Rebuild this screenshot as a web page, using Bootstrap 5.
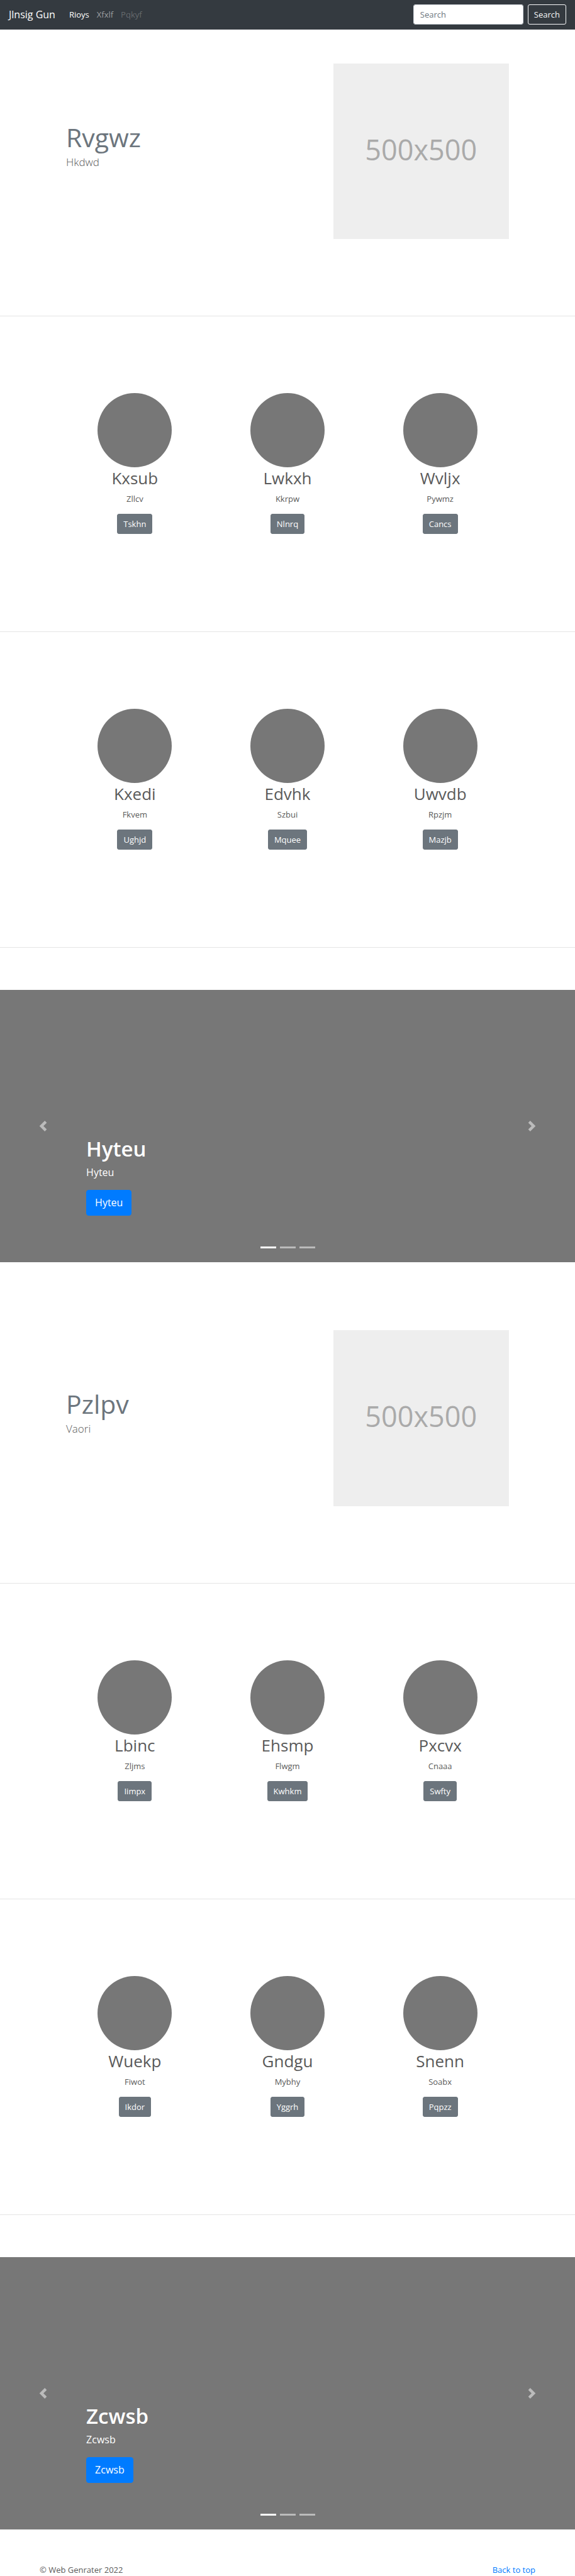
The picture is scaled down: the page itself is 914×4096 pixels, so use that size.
<!DOCTYPE html>
<html lang="en">
<head>
<meta charset="utf-8">
<meta name="viewport" content="width=device-width, initial-scale=1">
<title>Jlnsig Gun</title>
<link href="https://cdn.jsdelivr.net/npm/bootstrap@5.3.0/dist/css/bootstrap.min.css" rel="stylesheet">
<style>
  body { font-family: "Open Sans", "Noto Sans", sans-serif; font-size: 13px; line-height: 20px; color: #5a5a5a; background: #fff; }
  p { margin: 0; }
  .btn { --bs-btn-font-size: 13px; --bs-btn-line-height: 20px; --bs-btn-padding-x: 9px; --bs-btn-padding-y: 5px; --bs-btn-border-radius: 3px; }
  .btn-secondary { --bs-btn-bg: #6c757d; --bs-btn-border-color: #6c757d; }

  .site-nav { --bs-navbar-nav-link-padding-x: 6px; background: #343a40; padding: 7px 14px 8px; }
  .site-nav .navbar-brand { font-size: 16px; line-height: 24px; padding: 0; margin-right: 16px; color: #fff; }
  .site-nav .nav-link { font-size: 13px; line-height: 20px; padding-top: 6px; padding-bottom: 6px; color: rgba(255,255,255,.5); }
  .site-nav .nav-link.active { color: #fff; }
  .site-nav .nav-link.disabled { color: rgba(255,255,255,.25); }
  .site-nav .form-control { width: 175px; height: 32px; font-size: 13px; line-height: 20px; padding: 5px 10px; border-color: #ced4da; border-radius: 3px; margin-right: 7px; }
  .site-nav .form-control::placeholder { color: #6c757d; }

  .page-wrap { max-width: 728px; }
  .rule { margin: 0; border: 0; height: 1px; background: #e5e5e5; opacity: 1; }

  .feature { padding-top: 54px; padding-bottom: 122px; }
  .feature-text { padding-top: 92px; }
  .feature-title { font-size: 41px; line-height: 50px; font-weight: 400; color: #6c757d; margin: 0 0 2px; }
  .feature-lead { font-size: 17px; line-height: 25px; font-weight: 300; }
  .thumb { background: #eee; color: #aaa; font-size: 45px; }
  .thumb > div { padding-bottom: 6px; }

  .trio { padding-top: 122px; padding-bottom: 155px; }
  .avatar { display: block; width: 118px; height: 118px; margin: 0 auto 2px; background: #777; border-radius: 50%; }
  .trio-title { font-size: 26px; line-height: 31px; font-weight: 400; margin: 0 0 7px; }
  .trio p { margin-bottom: 14px; }

  .banner { margin-top: 67px; margin-bottom: 54px; }
  .banner .carousel-item { height: 433px; background: #777; }
  .banner .carousel-caption { bottom: 74px; padding: 0; text-align: left; }
  .banner-title { font-size: 33px; line-height: 40px; font-weight: 600; margin: 0 0 5px; }
  .banner-lead { font-size: 16px; line-height: 24px; }
  .banner .btn-primary { --bs-btn-bg: #007bff; --bs-btn-border-color: #007bff; --bs-btn-font-size: 16px; --bs-btn-line-height: 25px; --bs-btn-padding-x: 13px; --bs-btn-padding-y: 7px; --bs-btn-border-radius: 4px; margin-top: 16px; }
  .banner .carousel-indicators { margin-bottom: 14px; }
  .banner .carousel-indicators [data-bs-target] { width: 25px; height: 3px; margin: 0 3px; border-top-width: 8px; border-bottom-width: 8px; }
  .banner svg { width: 17px; height: 17px; fill: #fff; }

  .site-footer { max-width: 812px; }
  .site-footer a { color: #007bff; text-decoration: none; }
</style>
</head>
<body id="top">

<header>
  <nav class="navbar navbar-expand-md site-nav">
    <a class="navbar-brand" href="#">Jlnsig Gun</a>
    <ul class="navbar-nav flex-row me-auto">
      <li class="nav-item"><a class="nav-link active" href="#">Rioys</a></li>
      <li class="nav-item"><a class="nav-link" href="#">Xfxlf</a></li>
      <li class="nav-item"><a class="nav-link disabled" href="#">Pqkyf</a></li>
    </ul>
    <form class="d-flex" role="search">
      <input class="form-control" type="search" placeholder="Search" aria-label="Search">
      <button class="btn btn-outline-light" type="button">Search</button>
    </form>
  </nav>
</header>

<main>
  <section class="feature">
    <div class="container page-wrap"><div class="row">
      <div class="col-7 feature-text">
        <h2 class="feature-title">Rvgwz</h2>
        <p class="feature-lead">Hkdwd</p>
      </div>
      <div class="col-5"><div class="ratio ratio-1x1 thumb"><div class="d-flex align-items-center justify-content-center">500x500</div></div></div>
    </div></div>
  </section>
  <hr class="rule">

  <section class="trio">
    <div class="container page-wrap"><div class="row text-center">
      <div class="col-4"><span class="avatar"></span><h2 class="trio-title">Kxsub</h2><p>Zllcv</p><button class="btn btn-secondary" type="button">Tskhn</button></div>
      <div class="col-4"><span class="avatar"></span><h2 class="trio-title">Lwkxh</h2><p>Kkrpw</p><button class="btn btn-secondary" type="button">Nlnrq</button></div>
      <div class="col-4"><span class="avatar"></span><h2 class="trio-title">Wvljx</h2><p>Pywmz</p><button class="btn btn-secondary" type="button">Cancs</button></div>
    </div></div>
  </section>
  <hr class="rule">

  <section class="trio">
    <div class="container page-wrap"><div class="row text-center">
      <div class="col-4"><span class="avatar"></span><h2 class="trio-title">Kxedi</h2><p>Fkvem</p><button class="btn btn-secondary" type="button">Ughjd</button></div>
      <div class="col-4"><span class="avatar"></span><h2 class="trio-title">Edvhk</h2><p>Szbui</p><button class="btn btn-secondary" type="button">Mquee</button></div>
      <div class="col-4"><span class="avatar"></span><h2 class="trio-title">Uwvdb</h2><p>Rpzjm</p><button class="btn btn-secondary" type="button">Mazjb</button></div>
    </div></div>
  </section>
  <hr class="rule">

  <section id="bannerOne" class="carousel slide banner">
    <div class="carousel-indicators">
      <button type="button" data-bs-target="#bannerOne" data-bs-slide-to="0" class="active" aria-current="true" aria-label="Slide 1"></button>
      <button type="button" data-bs-target="#bannerOne" data-bs-slide-to="1" aria-label="Slide 2"></button>
      <button type="button" data-bs-target="#bannerOne" data-bs-slide-to="2" aria-label="Slide 3"></button>
    </div>
    <div class="carousel-inner">
      <div class="carousel-item active">
        <div class="carousel-caption">
          <h1 class="banner-title">Hyteu</h1>
          <p class="banner-lead">Hyteu</p>
          <button class="btn btn-primary" type="button">Hyteu</button>
        </div>
      </div>
      <div class="carousel-item"></div>
      <div class="carousel-item"></div>
    </div>
    <button class="carousel-control-prev" type="button" data-bs-target="#bannerOne" data-bs-slide="prev" aria-label="Previous">
      <svg viewBox="0 0 8 8" aria-hidden="true"><path d="M5.25 0l-4 4 4 4 1.5-1.5L4.25 4l2.5-2.5L5.25 0z"/></svg>
    </button>
    <button class="carousel-control-next" type="button" data-bs-target="#bannerOne" data-bs-slide="next" aria-label="Next">
      <svg viewBox="0 0 8 8" aria-hidden="true"><path d="M2.75 0l-1.5 1.5L3.75 4l-2.5 2.5L2.75 8l4-4-4-4z"/></svg>
    </button>
  </section>

  <section class="feature">
    <div class="container page-wrap"><div class="row">
      <div class="col-7 feature-text">
        <h2 class="feature-title">Pzlpv</h2>
        <p class="feature-lead">Vaori</p>
      </div>
      <div class="col-5"><div class="ratio ratio-1x1 thumb"><div class="d-flex align-items-center justify-content-center">500x500</div></div></div>
    </div></div>
  </section>
  <hr class="rule">

  <section class="trio">
    <div class="container page-wrap"><div class="row text-center">
      <div class="col-4"><span class="avatar"></span><h2 class="trio-title">Lbinc</h2><p>Zljms</p><button class="btn btn-secondary" type="button">Iimpx</button></div>
      <div class="col-4"><span class="avatar"></span><h2 class="trio-title">Ehsmp</h2><p>Flwgm</p><button class="btn btn-secondary" type="button">Kwhkm</button></div>
      <div class="col-4"><span class="avatar"></span><h2 class="trio-title">Pxcvx</h2><p>Cnaaa</p><button class="btn btn-secondary" type="button">Swfty</button></div>
    </div></div>
  </section>
  <hr class="rule">

  <section class="trio">
    <div class="container page-wrap"><div class="row text-center">
      <div class="col-4"><span class="avatar"></span><h2 class="trio-title">Wuekp</h2><p>Fiwot</p><button class="btn btn-secondary" type="button">Ikdor</button></div>
      <div class="col-4"><span class="avatar"></span><h2 class="trio-title">Gndgu</h2><p>Mybhy</p><button class="btn btn-secondary" type="button">Yggrh</button></div>
      <div class="col-4"><span class="avatar"></span><h2 class="trio-title">Snenn</h2><p>Soabx</p><button class="btn btn-secondary" type="button">Pqpzz</button></div>
    </div></div>
  </section>
  <hr class="rule">

  <section id="bannerTwo" class="carousel slide banner">
    <div class="carousel-indicators">
      <button type="button" data-bs-target="#bannerTwo" data-bs-slide-to="0" class="active" aria-current="true" aria-label="Slide 1"></button>
      <button type="button" data-bs-target="#bannerTwo" data-bs-slide-to="1" aria-label="Slide 2"></button>
      <button type="button" data-bs-target="#bannerTwo" data-bs-slide-to="2" aria-label="Slide 3"></button>
    </div>
    <div class="carousel-inner">
      <div class="carousel-item active">
        <div class="carousel-caption">
          <h1 class="banner-title">Zcwsb</h1>
          <p class="banner-lead">Zcwsb</p>
          <button class="btn btn-primary" type="button">Zcwsb</button>
        </div>
      </div>
      <div class="carousel-item"></div>
      <div class="carousel-item"></div>
    </div>
    <button class="carousel-control-prev" type="button" data-bs-target="#bannerTwo" data-bs-slide="prev" aria-label="Previous">
      <svg viewBox="0 0 8 8" aria-hidden="true"><path d="M5.25 0l-4 4 4 4 1.5-1.5L4.25 4l2.5-2.5L5.25 0z"/></svg>
    </button>
    <button class="carousel-control-next" type="button" data-bs-target="#bannerTwo" data-bs-slide="next" aria-label="Next">
      <svg viewBox="0 0 8 8" aria-hidden="true"><path d="M2.75 0l-1.5 1.5L3.75 4l-2.5 2.5L2.75 8l4-4-4-4z"/></svg>
    </button>
  </section>
</main>

<footer class="container site-footer d-flex justify-content-between">
  <p>© Web Genrater 2022</p>
  <a href="#top">Back to top</a>
</footer>

<script src="https://cdn.jsdelivr.net/npm/bootstrap@5.3.0/dist/js/bootstrap.bundle.min.js"></script>
</body>
</html>
